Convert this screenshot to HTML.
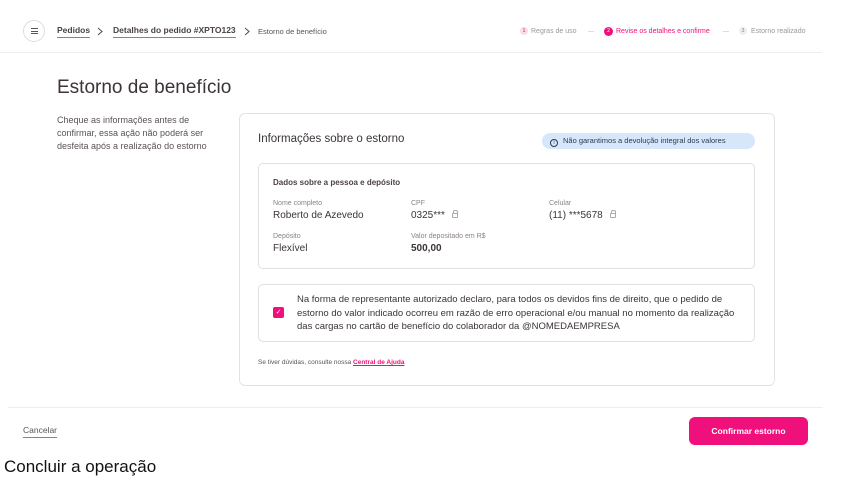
<!DOCTYPE html>
<html><head><meta charset="utf-8"><style>
*{margin:0;padding:0;box-sizing:border-box}
body{width:867px;height:486px;background:#fff;font-family:"Liberation Sans",sans-serif;color:#3b3438;position:relative;overflow:hidden}
.a{position:absolute;white-space:nowrap}
.u{border-bottom:1.5px solid #8a8088;padding-bottom:2px}
.lbl{font-size:7px;color:#8a8288}
.val{font-size:10px;color:#3b3438}
.lock{display:inline-block;width:6px;height:5px;border:1px solid #aaa;border-radius:1px;margin-left:4px;position:relative;top:0}
.lock:before{content:"";position:absolute;left:0.5px;top:-4px;width:3px;height:3px;border:1px solid #aaa;border-bottom:none;border-radius:2px 2px 0 0}
</style></head><body>
<div class="a" style="left:23px;top:20px;width:22px;height:22px;border:1px solid #ddd;border-radius:50%"></div>
<div class="a" style="left:31px;top:28px;width:7px;height:1px;background:#555"></div>
<div class="a" style="left:31px;top:30.5px;width:7px;height:1px;background:#555"></div>
<div class="a" style="left:31px;top:33px;width:7px;height:1px;background:#555"></div>
<div class="a u" style="left:57px;top:25px;font-size:8.5px;font-weight:bold;color:#4a4248">Pedidos</div>
<svg class="a" style="left:96px;top:27px" width="8" height="9"><path d="M2 1L6 4.5L2 8" stroke="#555" stroke-width="1.1" fill="none"/></svg>
<div class="a u" style="left:113px;top:25px;font-size:8.5px;font-weight:bold;color:#4a4248">Detalhes do pedido #XPTO123</div>
<svg class="a" style="left:243px;top:27px" width="8" height="9"><path d="M2 1L6 4.5L2 8" stroke="#555" stroke-width="1.1" fill="none"/></svg>
<div class="a" style="left:258px;top:27px;font-size:7.5px;color:#555">Estorno de benefício</div>

<div class="a" style="left:520px;top:27px;width:8px;height:8px;border-radius:50%;background:#fcdbe9;font-size:5px;text-align:center;line-height:8px;color:#c02070">1</div>
<div class="a" style="left:531px;top:27px;font-size:7px;line-height:9px;color:#999">Regras de uso</div>
<div class="a" style="left:588px;top:31px;width:6px;height:1px;background:#ddd"></div>
<div class="a" style="left:604px;top:27px;width:9px;height:9px;border-radius:50%;background:#f0107b;font-size:5px;text-align:center;line-height:9px;color:#fff">2</div>
<div class="a" style="left:616px;top:27px;font-size:7px;line-height:9px;color:#f0107b">Revise os detalhes e confirme</div>
<div class="a" style="left:723px;top:31px;width:6px;height:1px;background:#ddd"></div>
<div class="a" style="left:739px;top:27px;width:8px;height:8px;border-radius:50%;background:#eee;font-size:5px;text-align:center;line-height:8px;color:#888">3</div>
<div class="a" style="left:751px;top:27px;font-size:7px;line-height:9px;color:#999">Estorno realizado</div>
<div class="a" style="left:0;top:52px;width:822px;height:1px;background:#eee"></div>

<div class="a" style="left:57px;top:77px;font-size:19px;color:#3b3438">Estorno de benefício</div>
<div class="a" style="left:57px;top:114px;font-size:9px;line-height:13px;color:#5a5258">Cheque as informações antes de<br>confirmar, essa ação não poderá ser<br>desfeita após a realização do estorno</div>

<div class="a" style="left:239px;top:113px;width:536px;height:273px;border:1px solid #e3e3e3;border-radius:6px"></div>
<div class="a" style="left:258px;top:133px;font-size:11.5px;color:#3b3438">Informações sobre o estorno</div>
<div class="a" style="left:542px;top:133px;width:213px;height:16px;border-radius:8px;background:#d6e6fb;font-size:7.5px;line-height:16px;padding-left:8px;color:#2c3a50"><span style="display:inline-block;width:8px;height:8px;border:1px solid #2c3a50;border-radius:50%;font-size:5px;line-height:6px;text-align:center;vertical-align:-1px;margin-right:5px">i</span>Não garantimos a devolução integral dos valores</div>

<div class="a" style="left:258px;top:163px;width:497px;height:106px;border:1px solid #e0e0e0;border-radius:5px"></div>
<div class="a" style="left:273px;top:178px;font-size:8px;font-weight:bold;color:#4a4248">Dados sobre a pessoa e depósito</div>
<div class="a lbl" style="left:273px;top:200px">Nome completo</div>
<div class="a val" style="left:273px;top:210px">Roberto de Azevedo</div>
<div class="a lbl" style="left:411px;top:200px">CPF</div>
<div class="a val" style="left:411px;top:210px">0325*** <span class="lock"></span></div>
<div class="a lbl" style="left:549px;top:200px">Celular</div>
<div class="a val" style="left:549px;top:210px">(11) ***5678 <span class="lock"></span></div>
<div class="a lbl" style="left:273px;top:233px">Depósito</div>
<div class="a val" style="left:273px;top:243px">Flexível</div>
<div class="a lbl" style="left:411px;top:233px">Valor depositado em R$</div>
<div class="a val" style="left:411px;top:243px;font-weight:bold">500,00</div>

<div class="a" style="left:258px;top:284px;width:497px;height:58px;border:1px solid #e0e0e0;border-radius:5px"></div>
<div class="a" style="left:273px;top:307px;width:11px;height:11px;border-radius:2px;background:#f0107b;color:#fff;font-size:7px;text-align:center;line-height:11px">✓</div>
<div class="a" style="left:297px;top:293px;font-size:9.5px;line-height:13.5px;color:#3b3438">Na forma de representante autorizado declaro, para todos os devidos fins de direito, que o pedido de<br>estorno do valor indicado ocorreu em razão de erro operacional e/ou manual no momento da realização<br>das cargas no cartão de benefício do colaborador da @NOMEDAEMPRESA</div>
<div class="a" style="left:258px;top:359px;font-size:6.5px;color:#555">Se tiver dúvidas, consulte nossa <span style="color:#f0107b;font-weight:bold;text-decoration:underline">Central de Ajuda</span></div>

<div class="a" style="left:8px;top:407px;width:815px;height:1px;background:#eee"></div>
<div class="a u" style="left:23px;top:425px;font-size:8.5px;color:#5a5258">Cancelar</div>
<div class="a" style="left:689px;top:417px;width:119px;height:28px;border-radius:6px;background:#f0107b;color:#fff;font-size:8.5px;font-weight:bold;text-align:center;line-height:28px">Confirmar estorno</div>
<div class="a" style="left:4px;top:457px;font-size:17px;color:#111">Concluir a operação</div>
</body></html>
